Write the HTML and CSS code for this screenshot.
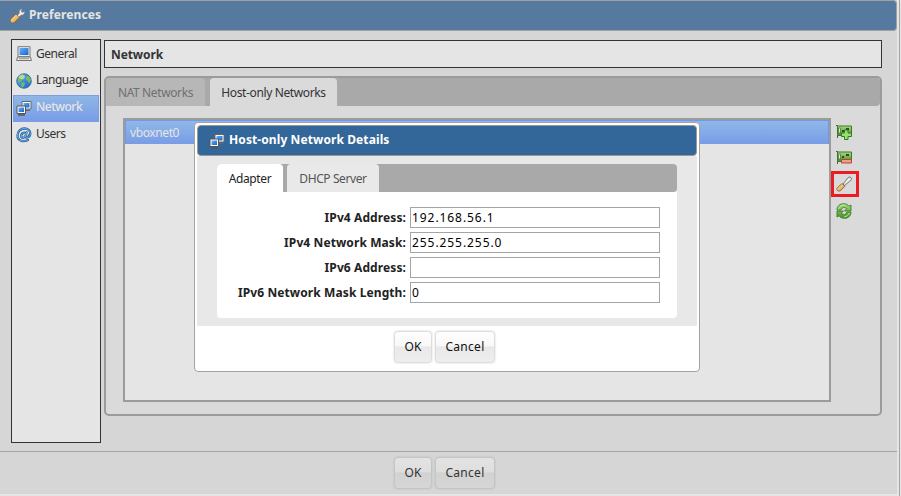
FILE: index.html
```html
<!DOCTYPE html>
<html lang="en">
<head>
<meta charset="utf-8">
<title>Preferences</title>
<link rel="stylesheet" href="styles.css">
</head>
<body>
<svg class="defs" aria-hidden="true">
  <defs>
    <linearGradient id="blue" x1="0" y1="0" x2="1" y2="1"><stop offset="0" stop-color="#66b0f4"/><stop offset="1" stop-color="#1764cf"/></linearGradient>
    <linearGradient id="gold" x1="0" y1="0" x2="1" y2="1"><stop offset="0" stop-color="#fff0c0"/><stop offset="1" stop-color="#d98a22"/></linearGradient>
    <linearGradient id="green" x1="0" y1="0" x2="0" y2="1"><stop offset="0" stop-color="#a9da7c"/><stop offset="1" stop-color="#449226"/></linearGradient>
    <symbol id="screens" viewBox="0 0 16 16">
      <path d="M6 1.500h9v7.500H6z" fill="#fff" stroke="#666"/><path d="M7.500 3h6v4.500h-6z" fill="url(#blue)"/>
      <path d="M10 10.500h4" stroke="#666"/>
      <path d="M1 6h8.500v7.500H1z" fill="#fff" stroke="#555"/><path d="M2.500 7.500H8V12H2.500z" fill="url(#blue)"/>
      <path d="M2 15h7" stroke="#555" stroke-width="1.500"/>
    </symbol>
    <symbol id="card" viewBox="0 0 16 16">
      <path d="M0 1.500h1.500V14" fill="none" stroke="#555"/>
      <path d="M1.500 2h14v9.500h-14z" fill="url(#green)" stroke="#3b7a2a"/>
      <path d="M2.500 4h2v5h-2z" fill="#d8eecb" stroke="#315f29" stroke-width=".6"/><path d="M6 6h2v2H6zM10 4h3v2h-3z" fill="#2f4d2b"/>
    </symbol>
  </defs>
</svg>
<div class="window">
  <header class="titlebar">
    <svg class="icon" viewBox="0 0 16 16"><path d="M8 8l2.500-3c-.7-2 .6-4 2.700-4l-1.300 2 1.500 1.600L15.500 3.500c.3 2.500-1.500 4-3.500 3.500L9.500 9.500z" fill="#eee" stroke="#888" stroke-width=".5"/><path d="M7 6l3.500 3.300-5 5c-2.500 2-5.500-.8-3.500-3.500z" fill="url(#gold)" stroke="#865a24" stroke-width=".7"/></svg>
    <h1>Preferences</h1>
  </header>
  <div class="content">
    <nav class="sidebar">
      <a class="item"><svg class="icon" viewBox="0 0 16 16"><path d="M2 .7h12v10H2z" fill="#eee" stroke="#777"/><path d="M3.500 2h9v7h-9z" fill="url(#blue)"/><path d="M1.500 11h13l1 3.500H.5z" fill="#e6e6e2" stroke="#777"/><path d="M3 12.700h10" stroke="#999"/></svg><span class="general">General</span></a>
      <a class="item"><svg class="icon" viewBox="0 0 16 16"><circle cx="8" cy="8" r="7.300" fill="url(#blue)" stroke="#2a5f95" stroke-width=".8"/><path d="M2 4l4-3 3 1-2 2 1 2-3 2-1 2-2-2zM10 4l3-1 2 4-2 4-1-3-2-1zM6 9l3 1-1 3-2 2-1-3z" fill="#79bc56"/><ellipse cx="6" cy="4" rx="3" ry="2" fill="#fff" opacity=".45"/></svg><span class="lang">Language</span></a>
      <a class="item selected"><svg class="icon"><use href="#screens"/></svg><span>Network</span></a>
      <a class="item"><svg class="icon" viewBox="0 0 16 16"><g fill="none" stroke-linecap="round"><path d="M10.500 5.500L9.600 10c0 1.500 4.700.5 4.700-3.500 0-3-2.500-5-5.800-5C4.500 1.500 1.500 4.500 1.500 8.500c0 5.500 6 7 10.500 4.500M10 7.500c0-3-4.800-2-4.800 1.500 0 2.500 3.300 2.500 4.500-.5" stroke="#255f9b" stroke-width="2.300"/><path d="M10.500 5.500L9.600 10c0 1.500 4.700.5 4.700-3.500 0-3-2.500-5-5.800-5C4.500 1.500 1.500 4.500 1.500 8.500c0 5.500 6 7 10.500 4.500M10 7.500c0-3-4.800-2-4.800 1.500 0 2.500 3.300 2.500 4.500-.5" stroke="#73b4e6" stroke-width="1"/></g></svg><span>Users</span></a>
    </nav>
    <main class="pane">
      <h2 class="heading">Network</h2>
      <section class="panel">
        <div class="tabs"><span class="tab nat">NAT Networks</span><span class="tab active host">Host-only Networks</span></div>
        <div class="panel-body">
          <div class="list"><div class="row">vboxnet0</div></div>
          <div class="tools">
            <a class="tool"><svg class="icon" viewBox="0 0 16 16"><use href="#card"/><path d="M8.500 6h3.500v3h3.500v3.500H12v3H8.500v-3h-3V9h3z" fill="#9bdd70" stroke="#337b20"/></svg></a>
            <a class="tool"><svg class="icon" viewBox="0 0 16 16"><use href="#card"/><path d="M5.500 9.500h10v3.500h-10z" fill="#f09c8c" stroke="#b84436"/></svg></a>
            <a class="tool marked"><svg class="icon" viewBox="0 0 16 16"><path d="M7 8l4-5c1-2 3-2.500 4-1.500s.5 3-1.500 4L8.500 9.500z" fill="#ddd" stroke="#666" stroke-width=".8"/><path d="M10 6.500l3-3.500" stroke="#fff"/><path d="M6 7.500l3 2.700-4.500 4.500c-2 1.300-4.800-.7-3.200-3z" fill="url(#gold)" stroke="#76552e" stroke-width=".8"/></svg></a>
            <a class="tool refresh"><svg class="icon" viewBox="0 0 16 16"><path d="M1 7C1 3 4 .7 7.500.7c2.500 0 4.300 1 5.500 2.500L15 2v6H8.500l2.300-2.300C9 4 6 4 5 7zM15 9c0 4-3 6.300-6.500 6.300-2.500 0-4.500-1-5.500-2.500L1 14V8h6.500l-2.300 2.300C7 12 10 12 11 9z" fill="url(#green)" stroke="#397b28" stroke-width=".9"/><path d="M2.500 6.500C3 3.500 6 1.500 9.500 2.300M13.500 9.800c-.8 2.500-3 4-5.500 4" fill="none" stroke="#c5eba8" stroke-width=".9"/></svg></a>
          </div>
        </div>
      </section>
    </main>
  </div>
  <footer class="actions"><button>OK</button><button>Cancel</button></footer>
</div>
<div class="dialog" role="dialog">
  <header class="dialog-title"><svg class="icon"><use href="#screens"/></svg><h2>Host-only Network Details</h2></header>
  <div class="dialog-body">
    <div class="dtabs"><span class="dtab current">Adapter</span><span class="dtab dhcp">DHCP Server</span></div>
    <form class="fields">
      <label for="a">IPv4 Address:</label><input id="a" value="192.168.56.1">
      <label for="b">IPv4 Network Mask:</label><input id="b" value="255.255.255.0">
      <label for="c">IPv6 Address:</label><input id="c">
      <label for="d">IPv6 Network Mask Length:</label><input id="d" value="0">
    </form>
  </div>
  <footer class="dialog-actions"><button>OK</button><button>Cancel</button></footer>
</div>
</body>
</html>
```
FILE: styles.css
```css
* { box-sizing: border-box; }
body { margin: 0; width: 901px; height: 496px; overflow: hidden; background: #e5e5e5; color: #333; font: 12px/16px "Noto Sans", sans-serif; }
h1, h2 { margin: 0; font-size: 12px; font-weight: 700; letter-spacing: .1px; }
.defs { position: absolute; width: 0; height: 0; }
.icon { width: 16px; height: 16px; flex: none; display: block; }
.window { width: 900px; height: 496px; border-right: 1px solid #a5a5a5; padding-right: 2px; display: flex; flex-direction: column; background: linear-gradient(#d6d6d6, #d6d6d6) 0 0 / 897px 494px no-repeat; }
.titlebar { width: 897px; height: 31px; flex: none; display: flex; align-items: center; gap: 4px; padding: 0 0 2px 9px; background: #567a9f; border: 1px solid #a0a0a0; border-left: 0; border-radius: 0 4px 4px 0; color: #e5e5e5; }
.titlebar .icon { margin-top: 2px; }
.content { height: 420px; flex: none; display: flex; gap: 3px; padding: 8px 15px 8px 11px; }
.sidebar { width: 90px; height: 404px; border: 1px solid #333; background: #e5e5e5; padding: 1px; letter-spacing: -.5px; }
.sidebar .icon { margin-top: -1px; }
.item { height: 27px; display: flex; align-items: center; gap: 4px; padding-left: 3px; }
.item span { padding-bottom: 3px; }
.item .general { padding-bottom: 1px; }
.item .lang { padding-bottom: 3px; }
.item.selected { background: linear-gradient(#8fb7e6, #799ce6); border: 1px solid #7a9de4; color: #e5e5e5; padding-left: 2px; font-weight: 500; }
.pane { width: 778px; padding-top: 1px; }
.heading { height: 28px; border: 1px solid #333; background: #e5e5e5; padding: 6px; letter-spacing: -.1px; }
.panel { height: 340px; margin-top: 8px; border: 2px solid #9b9b9b; border-radius: 5px; background: #dadada; }
.tabs { height: 28px; display: flex; gap: 5px; background: #a9a9a9; letter-spacing: -.38px; border-radius: 3px 3px 4px 4px; }
.tab { height: 28px; border-radius: 4px 4px 0 0; background: #b7b7b7; color: #707070; text-align: center; padding-top: 7px; white-space: nowrap; }
.tab.active { background: #dadada; color: #333; }
.nat { width: 99px; }
.host { width: 127px; }
.panel-body { display: flex; padding: 12px 0 0 17px; }
.list { width: 708px; height: 284px; border: 2px solid #9b9b9b; background: #e5e5e5; }
.row { height: 24px; border: 1px solid #7299e8; border-bottom: 0; background: linear-gradient(#8fb8e8, #799ce6); color: #e5e5e5; padding: 4px; letter-spacing: -.4px; }
.tools { padding-top: 1px; }
.tool { width: 28px; height: 26px; display: grid; place-items: center; padding-right: 2px; }
.tool.marked { border: 3px solid #ed1c24; }
.tool.refresh { padding-top: 2px; }
.actions, .dialog-actions { display: flex; justify-content: center; gap: 3px; }
.actions { height: 43px; border-top: 1px solid #a5a5a5; padding: 5px 8px 0 0; }
button { height: 32px; padding: 0; border: 1px solid #ddd; border-radius: 4px; background: linear-gradient(#fff 0, #f8f8f8 46%, #e8e8e8 50%, #eee 100%); box-shadow: 0 0 2px #ccc; color: #111; font: inherit; line-height: 16px; }
.actions button { border-color: #c4c4c4; background: linear-gradient(#e3e3e3 0, #dedede 46%, #d2d2d2 50%, #d6d6d6 100%); box-shadow: 0 0 2px #bbb; color: #333; }
button:first-child { width: 38px; }
button:last-child { width: 60px; letter-spacing: .3px; }
.dialog { position: absolute; left: 194px; top: 122px; width: 506px; height: 250px; background: #fff; border: 1px solid #a3a3a3; border-radius: 4px; padding: 2px; }
.dialog-title { height: 31px; display: flex; align-items: center; gap: 4px; padding: 0 0 2px 11px; background: #336699; border: 1px solid #999; border-radius: 4px; color: #fff; }
.dialog-title .icon { margin-top: 2px; }
.dialog-body { height: 170px; padding: 8px 20px; background: #e8e8e8; }
.dtabs { height: 28px; display: flex; gap: 4px; background: #a9a9a9; border-radius: 4px; }
.dtab { padding-top: 7px; text-align: center; height: 28px; width: 66px; border-radius: 4px 4px 0 0; background: #fff; color: #222; letter-spacing: -.4px; }
.dhcp { width: 92px; background: #e9e9e9; color: #555; }
.fields { margin: 0; height: 126px; display: grid; grid-template-columns: 189px 250px; grid-template-rows: repeat(4, 21px); gap: 4px; align-content: start; padding-top: 15px; background: #fff; border-radius: 0 0 4px 4px; }
label { text-align: right; font-weight: 700; padding-top: 3px; color: #222; white-space: nowrap; letter-spacing: .1px; }
input { width: 250px; height: 21px; border: 1px solid #a5a5a5; padding: 0 1px; background: #fff; color: #000; font: inherit; letter-spacing: .93px; outline: 0; }
.dialog-actions { padding: 5px 5px 0 0; }
```
